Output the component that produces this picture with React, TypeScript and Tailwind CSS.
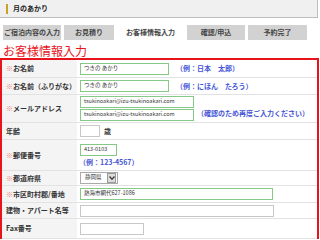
import React from "react";

const Req = () => <span className="text-[#f08080]">※</span>;

function Row({
  h,
  label,
  req,
  children,
  last,
}: {
  h: string;
  label: string;
  req?: boolean;
  children?: React.ReactNode;
  last?: boolean;
}) {
  return (
    <div className={`flex ${h} ${last ? "" : "border-b border-[#e2e2e2]"}`}>
      <div className="w-[75px] shrink-0 bg-[#f4f4f4] flex items-center pl-[4px] text-[7px] font-bold text-[#333] leading-none">
        {req && <Req />}
        <span>{label}</span>
      </div>
      <div className="flex-1 bg-white pl-[3px] flex flex-col justify-center">{children}</div>
    </div>
  );
}

const Input = ({ w, value, green }: { w: string; value?: string; green?: boolean }) => (
  <div
    className={`${w} h-[12px] bg-white border ${
      green ? "border-[#86c986]" : "border-[#c8c8c8]"
    } flex items-center pl-[3px] text-[5.5px] text-[#333] leading-none whitespace-nowrap overflow-hidden`}
  >
    {value}
  </div>
);

const Blue = ({ children, cls = "" }: { children: React.ReactNode; cls?: string }) => (
  <span className={`text-[7px] font-bold text-[#4656d6] leading-none whitespace-nowrap ${cls}`}>{children}</span>
);

export default function App() {
  const tabs = [
    { t: "ご宿泊内容の入力", w: "w-[58px]", on: false },
    { t: "お見積り", w: "w-[50px]", on: false },
    { t: "お客様情報入力", w: "w-[67px]", on: true },
    { t: "確認/申込", w: "w-[58px]", on: false },
    { t: "予約完了", w: "w-[59px]", on: false },
  ];
  return (
    <div className="w-[320px] h-[240px] bg-white overflow-hidden font-['Noto_Sans_CJK_JP',sans-serif]">
      <div className="w-[318px] h-[18px] bg-[#f0f0f0] border-r border-b border-[#bdbdbd] flex items-center pl-[6px]">
        <div className="w-[2px] h-[10px] bg-[#c9a227]" />
        <span className="ml-[5px] text-[7px] font-bold text-[#222] leading-none">月のあかり</span>
      </div>
      <div className="flex gap-[3px] mt-[7px] pl-[3px] h-[15px]">
        {tabs.map((tb) => (
          <div
            key={tb.t}
            className={`${tb.w} h-[15px] flex items-center justify-center text-[7px] font-bold text-[#444] leading-none ${
              tb.on ? "bg-white" : "bg-[#d2d2d2]"
            }`}
          >
            {tb.t}
          </div>
        ))}
      </div>
      <div className="mt-[3px] h-[15px] pl-[3px] text-[12px] leading-[15px] text-[#e8141c]">お客様情報入力</div>
      <div className="w-[319px] border-t-2 border-l-2 border-r-2 border-[#e8141c]">
        <Row h="h-[18px]" label="お名前" req>
          <div className="flex items-center">
            <Input w="w-[89px]" value="つきの あかり" green />
            <Blue cls="ml-[7px]">（例：日本　太郎）</Blue>
          </div>
        </Row>
        <Row h="h-[17px]" label="お名前（ふりがな）" req>
          <div className="flex items-center">
            <Input w="w-[89px]" value="つきの あかり" green />
            <Blue cls="ml-[7px]">（例：にほん　たろう）</Blue>
          </div>
        </Row>
        <Row h="h-[28px]" label="メールアドレス" req>
          <div className="flex items-center">
            <div className="flex flex-col gap-[1px]">
              <Input w="w-[114px]" value="tsukinoakari@izu-tsukinoakari.com" green />
              <Input w="w-[114px]" value="tsukinoakari@izu-tsukinoakari.com" green />
            </div>
            <Blue cls="ml-[3px] mt-[10px]">（確認のため再度ご入力ください）</Blue>
          </div>
        </Row>
        <Row h="h-[17px]" label="年齢">
          <div className="flex items-center">
            <Input w="w-[20px]" />
            <span className="ml-[4px] text-[7px] font-bold text-[#333] leading-none">歳</span>
          </div>
        </Row>
        <Row h="h-[31px]" label="郵便番号" req>
          <Input w="w-[37px]" value="413-0103" green />
          <Blue cls="mt-[3px] -ml-[1px]">（例：123-4567）</Blue>
        </Row>
        <Row h="h-[15px]" label="都道府県" req>
          <div className="w-[38px] h-[12px] border border-[#aaa] bg-white flex items-center">
            <span className="pl-[4px] flex-1 text-[5.5px] text-[#333] leading-none">静岡県</span>
            <div className="w-[9px] h-[10px] mr-[1px] bg-[#dcdcdc] border border-[#999] flex items-center justify-center">
              <svg width="6" height="4" viewBox="0 0 6 4">
                <path d="M0.5 0.5 L3 3.2 L5.5 0.5" fill="none" stroke="#333" strokeWidth="1.2" />
              </svg>
            </div>
          </div>
        </Row>
        <Row h="h-[17px]" label="市区町村郡/番地" req>
          <Input w="w-[193px]" value="熱海市網代627-1086" green />
        </Row>
        <Row h="h-[16px]" label="建物・アパート名等">
          <Input w="w-[194px]" />
        </Row>
        <Row h="h-[20px]" label="Fax番号">
          <Input w="w-[64px]" />
        </Row>
      </div>
    </div>
  );
}
